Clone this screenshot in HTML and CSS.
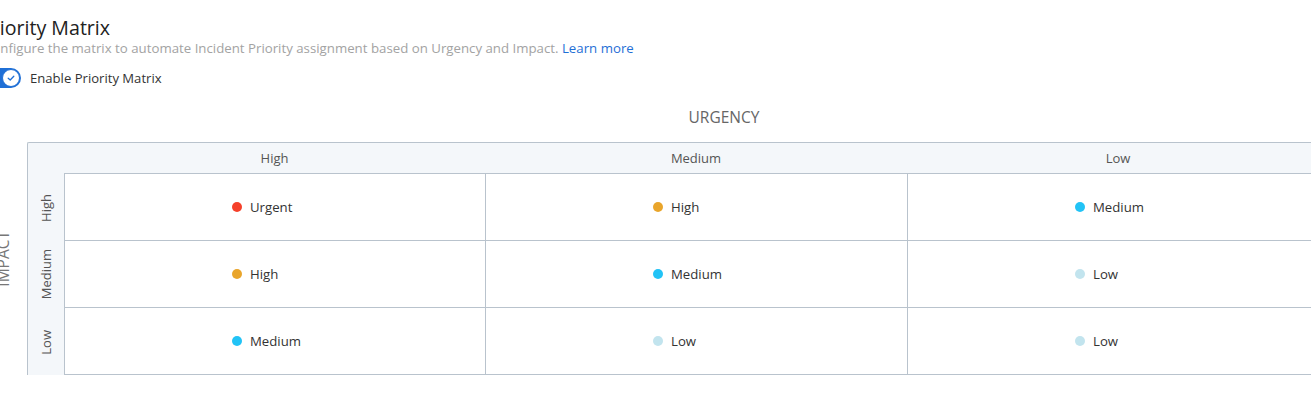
FILE: index.html
```html
<!DOCTYPE html>
<html>
<head>
<meta charset="utf-8">
<link rel="stylesheet" href="styles.css">
</head>
<body>
<div class="page">
  <h2 class="title">Priority Matrix</h2>
  <p class="desc">Configure the matrix to automate Incident Priority assignment based on Urgency and Impact. <a class="link" href="#">Learn more</a></p>
  <div class="toggle-row">
    <span class="toggle"><span class="knob"><svg width="10" height="10" viewBox="0 0 10 10"><path d="M2.2 5.2 L4.2 7 L7.8 3.2" fill="none" stroke="#1f6fd6" stroke-width="1.3" stroke-linecap="round" stroke-linejoin="round"/></svg></span></span>
    <span class="toggle-label">Enable Priority Matrix</span>
  </div>
  <div class="axis-x">URGENCY</div>
  <div class="matrix">
    <div class="axis-y"><span>IMPACT</span></div>
    <div class="grid">
      <div class="corner"></div>
      <div class="col-head">High</div>
      <div class="col-head">Medium</div>
      <div class="col-head">Low</div>

      <div class="row-head"><span>High</span></div>
      <div class="cell"><i class="dot urgent"></i>Urgent</div>
      <div class="cell"><i class="dot high"></i>High</div>
      <div class="cell"><i class="dot medium"></i>Medium</div>

      <div class="row-head"><span>Medium</span></div>
      <div class="cell"><i class="dot high"></i>High</div>
      <div class="cell"><i class="dot medium"></i>Medium</div>
      <div class="cell"><i class="dot low"></i>Low</div>

      <div class="row-head last"><span>Low</span></div>
      <div class="cell"><i class="dot medium"></i>Medium</div>
      <div class="cell"><i class="dot low"></i>Low</div>
      <div class="cell"><i class="dot low"></i>Low</div>
    </div>
  </div>
</div>
</body>
</html>
```

FILE: styles.css
```css
* { box-sizing: border-box; }
html, body { margin: 0; padding: 0; background: #fff; overflow: hidden; }
body { font-family: "Open Sans", "Noto Sans", sans-serif; color: #333; }

.page {
  margin-left: -16px;
  padding-top: 16px;
  width: 1480px;
}

.title {
  margin: 0 0 0 -4px;
  font-size: 19.6px;
  font-weight: 400;
  line-height: 24px;
  color: #222;
}

.desc {
  margin: -1px 0 0;
  font-size: 13.25px;
  line-height: 18px;
  color: #a3a3a3;
}
.link { color: #1f6fd6; text-decoration: none; }

.toggle-row {
  margin-top: 11px;
  display: flex;
  align-items: center;
  gap: 9px;
  height: 20px;
}
.toggle {
  width: 37px;
  height: 20px;
  border-radius: 10px;
  background: #1f6fd6;
  display: flex;
  align-items: center;
  justify-content: flex-end;
  padding-right: 1px;
}
.knob {
  width: 18px;
  height: 18px;
  border-radius: 50%;
  background: #fff;
  border: 1.5px solid #1f6fd6;
  display: flex;
  align-items: center;
  justify-content: center;
}
.toggle-label { font-size: 13.1px; color: #333; }

.axis-x {
  margin-top: 20px;
  width: 1480px;
  text-align: center;
  font-size: 15.5px;
  color: #666;
  line-height: 18px;
}

.matrix {
  margin-top: 16px;
  display: flex;
}
.axis-y {
  width: 38px;
  margin-right: 5px;
  display: flex;
  align-items: center;
  justify-content: center;
}
.axis-y span {
  writing-mode: vertical-rl;
  transform: rotate(180deg);
  font-size: 15.5px;
  color: #777;
  line-height: 18px;
}

.grid {
  display: grid;
  grid-template-columns: 36px 421px 422px 422px;
  grid-template-rows: 31px 67px 67px 67px;
  background: #f4f7fa;
  border-top: 1px solid #b9c3cd;
  border-left: 1px solid #b9c3cd;
  border-top-left-radius: 2px;
  font-size: 13px;
}
.col-head {
  border-bottom: 1px solid #b9c3cd;
  display: flex;
  align-items: center;
  justify-content: center;
  color: #555;
}
.row-head {
  display: flex;
  align-items: center;
  justify-content: center;
  color: #555;
}
.row-head.last { border-bottom: 1px solid #b9c3cd; height: 69px; }
.row-head span {
  writing-mode: vertical-rl;
  transform: rotate(180deg);
  line-height: 16px;
}
.cell {
  background: #fff;
  border-left: 1px solid #b9c3cd;
  border-bottom: 1px solid #b9c3cd;
  display: flex;
  align-items: center;
  justify-content: flex-start;
  padding-left: 167px;
  padding-bottom: 1px;
  gap: 8px;
  color: #333;
  font-size: 13.2px;
}
.dot {
  width: 10px;
  height: 10px;
  border-radius: 50%;
  display: inline-block;
  flex: none;
}
.dot.urgent { background: #f5402a; }
.dot.high { background: #e9a52b; }
.dot.medium { background: #22c3f6; }
.dot.low { background: #c2e4ee; }
```
